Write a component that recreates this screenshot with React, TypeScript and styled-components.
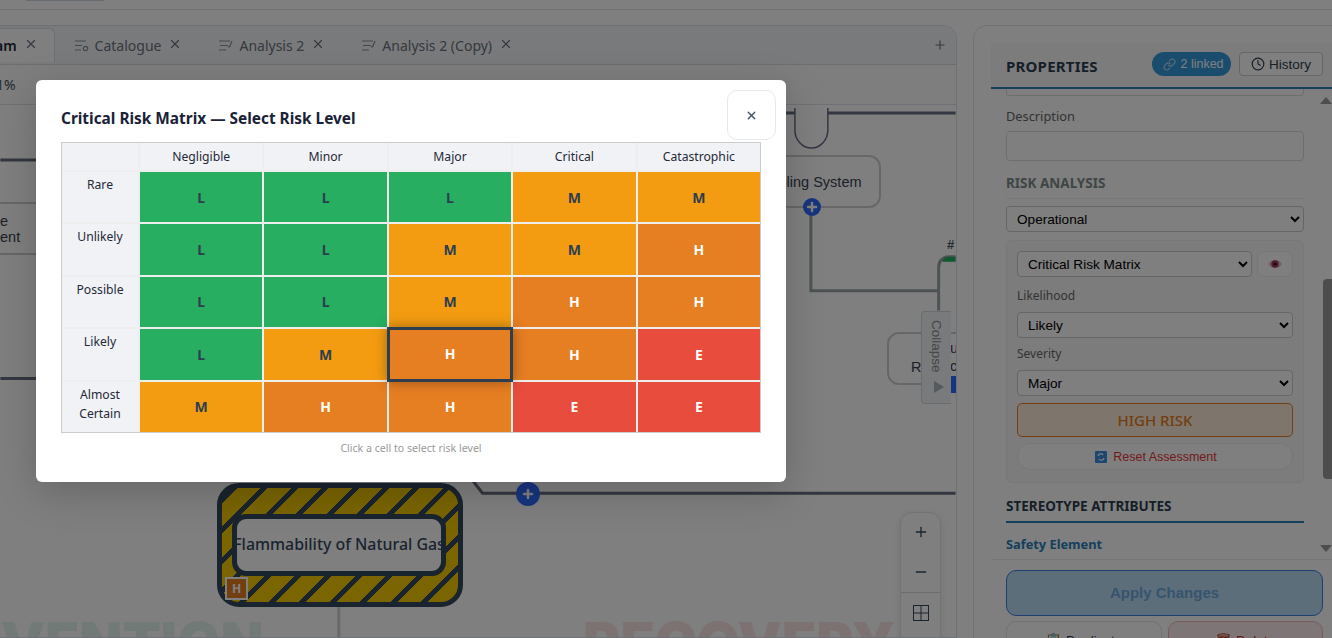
import React from 'react'
import styled, { createGlobalStyle } from 'styled-components'
import { Clock, Link, Plus, Minus, X } from 'lucide-react'

type Level = 'L' | 'M' | 'H' | 'E'

const severities = ['Negligible', 'Minor', 'Major', 'Critical', 'Catastrophic']

const matrix: { label: string; cells: Level[] }[] = [
  { label: 'Rare', cells: ['L', 'L', 'L', 'M', 'M'] },
  { label: 'Unlikely', cells: ['L', 'L', 'M', 'M', 'H'] },
  { label: 'Possible', cells: ['L', 'L', 'M', 'H', 'H'] },
  { label: 'Likely', cells: ['L', 'M', 'H', 'H', 'E'] },
  { label: 'Almost Certain', cells: ['M', 'H', 'H', 'E', 'E'] },
]

const levelColors: Record<Level, string> = {
  L: '#27ae60',
  M: '#f39c12',
  H: '#e67e22',
  E: '#e74c3c',
}

const GlobalStyle = createGlobalStyle`
  html, body {
    margin: 0;
    padding: 0;
    overflow: hidden;
  }

  body {
    background: #ffffff;
    font-family: 'Noto Sans', 'Open Sans', sans-serif;
  }

  * {
    box-sizing: border-box;
  }
`

const Page = styled.div`
  display: flex;
  flex-direction: column;
  height: 638px;
  overflow: hidden;
  position: relative;
  width: 1332px;
`

const TopBar = styled.header`
  background: #fff;
  border-bottom: 1px solid #dfe3e8;
  flex: 0 0 10px;
  padding-left: 26px;
`

const TopBarNub = styled.div`
  background: #cfd8e6;
  height: 1px;
  width: 78px;
`

const Workspace = styled.div`
  display: flex;
  flex: 1;
  gap: 16px;
  min-height: 0;
  padding-top: 15px;
`

const Editor = styled.section`
  background: #fff;
  border: 1px solid #dfe4ea;
  border-left: 0;
  border-radius: 0 14px 0 0;
  display: flex;
  flex: 0 0 957px;
  flex-direction: column;
  overflow: hidden;
`

const TabBar = styled.div`
  align-items: flex-start;
  background: #f3f5f7;
  border-bottom: 1px solid #d9dde2;
  display: flex;
  flex: 0 0 39px;
  padding: 2px 9px 0 0;
`

const Tab = styled.div<{ $active?: boolean }>`
  align-items: center;
  background: ${(p) => (p.$active ? '#fff' : 'transparent')};
  border: 1px solid ${(p) => (p.$active ? '#dde1e6' : 'transparent')};
  border-bottom: 0;
  border-radius: 0 6px 0 0;
  color: ${(p) => (p.$active ? '#1f2937' : '#6b7280')};
  display: flex;
  font-size: 14px;
  font-weight: ${(p) => (p.$active ? 600 : 400)};
  gap: 6px;
  height: 34px;
  margin-left: ${(p) => (p.$active ? '-43px' : '0')};
  padding: ${(p) => (p.$active ? '0 16px 0 0' : '0 16px 0 18px')};
  white-space: nowrap;
`

const TabClose = styled.span`
  color: #6b7280;
  display: inline-flex;
  margin-left: 1px;
  margin-top: -3px;
`

const AddTab = styled.span`
  align-items: center;
  color: #6b7280;
  display: flex;
  height: 34px;
  margin-left: auto;
`

const Toolbar = styled.div`
  align-items: center;
  background: #fdfdfd;
  border-bottom: 1px solid #dde1e6;
  color: #4b5563;
  display: flex;
  flex: 0 0 40px;
  font-size: 14px;
  margin-left: -12px;
`

const Canvas = styled.div`
  background: #ffffff;
  flex: 1;
  overflow: hidden;
  position: relative;
`

const Wires = styled.svg`
  height: 100%;
  left: 0;
  position: absolute;
  top: 0;
  width: 100%;
`

const FlowNode = styled.div<{ $x: number; $y: number; $w: number; $h: number }>`
  align-items: center;
  background: #fff;
  border: 2px solid #cfcfcf;
  border-radius: 12px;
  color: #374151;
  display: flex;
  font-family: 'Liberation Sans', Arial, sans-serif;
  font-size: 14.5px;
  height: ${(p) => p.$h}px;
  left: ${(p) => p.$x}px;
  line-height: 16px;
  position: absolute;
  top: ${(p) => p.$y}px;
  width: ${(p) => p.$w}px;
`

const NodeText = styled.span<{ $indent: number; $drop?: number }>`
  margin-left: ${(p) => p.$indent}px;
  margin-top: ${(p) => p.$drop ?? 0}px;
`

const NodeTail = styled.div`
  color: #374151;
  font-family: 'Liberation Sans', Arial, sans-serif;
  font-size: 14.5px;
  left: 950px;
  line-height: 18px;
  position: absolute;
  top: 234px;
`

const WireTag = styled.div`
  color: #4b5563;
  font-family: 'Liberation Sans', Arial, sans-serif;
  font-size: 13px;
  font-weight: 700;
  left: 947px;
  position: absolute;
  top: 132px;
`

const PortMark = styled.div`
  background: #2f6bff;
  height: 17px;
  left: 951px;
  position: absolute;
  top: 271px;
  width: 8px;
`

const AddBubble = styled.div<{ $x: number; $y: number; $size: number }>`
  align-items: center;
  background: #2f6bff;
  border-radius: 50%;
  color: #fff;
  display: flex;
  height: ${(p) => p.$size}px;
  justify-content: center;
  left: ${(p) => p.$x}px;
  position: absolute;
  top: ${(p) => p.$y}px;
  width: ${(p) => p.$size}px;
`

const HazardNode = styled.div`
  align-items: center;
  background: repeating-linear-gradient(
    -45deg,
    #34495e 0,
    #34495e 5px,
    #f5cb00 5px,
    #f5cb00 21.5px
  );
  border: 5px solid #34495e;
  border-radius: 22px;
  display: flex;
  height: 124px;
  justify-content: center;
  left: 217px;
  padding-right: 2px;
  position: absolute;
  top: 378px;
  width: 246px;
`

const HazardLabel = styled.div`
  align-items: center;
  background: #fff;
  border: 5px solid #34495e;
  border-radius: 14px;
  color: #34495e;
  display: flex;
  font-size: 15.9px;
  font-weight: 500;
  height: 62px;
  justify-content: center;
  overflow: hidden;
  padding-bottom: 2px;
  white-space: nowrap;
  width: 214px;
`

const RiskBadge = styled.div`
  align-items: center;
  background: #e67e22;
  border: 2px solid #fff;
  bottom: 2px;
  color: #fff;
  display: flex;
  font-size: 12px;
  font-weight: 700;
  height: 23px;
  justify-content: center;
  left: 3px;
  position: absolute;
  width: 23px;
`

const Watermark = styled.div<{ $x: number; $color: string }>`
  color: ${(p) => p.$color};
  font-family: Inter, 'Liberation Sans', Arial, sans-serif;
  font-size: 56px;
  font-weight: 900;
  left: ${(p) => p.$x}px;
  position: absolute;
  top: 504px;
  white-space: nowrap;
`

const CollapseTab = styled.div`
  align-items: center;
  background: #f3f5f7;
  border: 1px solid #d5d9de;
  border-right: 0;
  border-radius: 4px 0 0 4px;
  color: #868c93;
  display: flex;
  flex-direction: column;
  font-family: 'Liberation Sans', Arial, sans-serif;
  font-size: 13.5px;
  gap: 8px;
  height: 93px;
  left: 921px;
  padding-top: 8px;
  position: absolute;
  top: 206px;
  width: 30px;
`

const CollapseLabel = styled.span`
  writing-mode: vertical-rl;
`

const CollapseArrow = styled.span`
  border-bottom: 6px solid transparent;
  border-left: 10px solid #a9b4ba;
  border-top: 6px solid transparent;
  height: 0;
  margin-left: 4px;
  width: 0;
`

const ZoomControls = styled.div`
  background: #fff;
  border: 1px solid #e5e7eb;
  border-radius: 12px 12px 0 0;
  box-shadow: 0 2px 8px rgba(0, 0, 0, 0.1);
  color: #34495e;
  height: 140px;
  left: 900px;
  position: absolute;
  top: 407px;
  width: 41px;
`

const ZoomButton = styled.div<{ $divided?: boolean }>`
  align-items: center;
  border-top: ${(p) => (p.$divided ? '1px solid #d8dbe0' : '0')};
  display: flex;
  height: 40px;
  justify-content: center;

  &:first-child {
    margin-top: -1px;
  }
`

const Sidebar = styled.aside`
  background: #fff;
  border: 1px solid #dfe7ef;
  border-bottom: 0;
  border-right: 0;
  border-radius: 14px 0 0 0;
  display: flex;
  flex: 1;
  flex-direction: column;
  min-width: 0;
  padding: 17px 0 0 17px;
`

const SidebarHeader = styled.div`
  align-items: center;
  background: #f8f9fa;
  border-bottom: 2px solid #2980b9;
  display: flex;
  flex: 0 0 46px;
  gap: 8px;
  padding: 0 9px 2px 15px;
`

const SidebarTitle = styled.h2`
  color: #2c3e50;
  font-size: 15px;
  font-weight: 700;
  letter-spacing: 0.2px;
  margin: 3px auto 0 0;
`

const LinkedPill = styled.span`
  align-items: center;
  background: #3498db;
  border-radius: 12px;
  color: #fff;
  display: flex;
  font-family: 'Liberation Sans', Arial, sans-serif;
  font-size: 12.5px;
  gap: 4px;
  height: 24px;
  justify-content: center;
  padding-left: 4px;
  width: 79px;
`

const HistoryButton = styled.span`
  align-items: center;
  background: #fff;
  border: 1px solid #ccc;
  border-radius: 4px;
  color: #2c3e50;
  display: flex;
  font-family: 'Liberation Sans', Arial, sans-serif;
  font-size: 13.5px;
  gap: 4px;
  height: 24px;
  justify-content: center;
  width: 84px;
`

const ScrollArea = styled.div`
  flex: 0 0 470px;
  overflow: hidden;
  padding: 0 28px 0 15px;
  position: relative;
`

const ScrollArrow = styled.div<{ $down?: boolean }>`
  border-left: 6px solid transparent;
  border-right: 6px solid transparent;
  ${(p) =>
    p.$down
      ? 'border-top: 7px solid #9a9a9a; bottom: 7px;'
      : 'border-bottom: 7px solid #9a9a9a; top: 8px;'}
  height: 0;
  position: absolute;
  right: 0;
  width: 0;
`

const ScrollThumb = styled.div`
  background: #9a9a9a;
  border-radius: 4px 0 0 4px;
  height: 200px;
  position: absolute;
  right: 0;
  top: 190px;
  width: 9px;
`

const Input = styled.div<{ $clipped?: boolean }>`
  background: #fff;
  border: 1px solid #ddd;
  border-radius: 4px;
  height: ${(p) => (p.$clipped ? '7px' : '30px')};
  ${(p) => p.$clipped && 'border-top: 0; border-radius: 0 0 4px 4px;'}
`

const FieldLabel = styled.label<{ $small?: boolean }>`
  color: #666;
  display: block;
  font-size: ${(p) => (p.$small ? '12px' : '12.8px')};
  line-height: 18px;
  margin: ${(p) => (p.$small ? '7px 0 7px' : '11px 0 6px')};
`

const SectionTitle = styled.h3`
  border-bottom: 1px solid #eee;
  color: #7f8c8d;
  font-size: 13.5px;
  font-weight: 700;
  line-height: 18px;
  margin: 13px 0 7px;
  padding-bottom: 6px;
`

const NativeSelect = styled.select<{ $grow?: boolean }>`
  background: #fff;
  border: 1px solid #ccc;
  border-radius: 4px;
  color: #000;
  display: block;
  flex: ${(p) => (p.$grow ? 1 : 'none')};
  font-family: 'Liberation Sans', Arial, sans-serif;
  font-size: 13.6px;
  height: 26px;
  min-width: 0;
  padding: 0 6px;
  width: ${(p) => (p.$grow ? 'auto' : '100%')};
`

const RiskBox = styled.div`
  background: #f8f9fa;
  border: 1px solid #eee;
  border-radius: 6px;
  margin-top: 8px;
  padding: 10px 10px 12px;
`

const MatrixRow = styled.div`
  align-items: center;
  display: flex;
  gap: 5px;
  margin-bottom: 10px;
`

const EyeButton = styled.div`
  align-items: center;
  background: #fff;
  border: 1px solid #eee;
  border-radius: 8px;
  display: flex;
  flex: 0 0 36px;
  height: 26px;
  justify-content: center;
`

const RiskResult = styled.div`
  align-items: center;
  background: #fdebd9;
  border: 1px solid #e67e22;
  border-radius: 5px;
  color: #e67e22;
  display: flex;
  font-size: 15px;
  font-weight: 500;
  height: 34px;
  justify-content: center;
  margin-top: 7px;
`

const ResetButton = styled.div`
  align-items: center;
  background: #fff;
  border: 1px solid #eee;
  border-radius: 13px;
  color: #e53935;
  display: flex;
  font-family: 'Liberation Sans', Arial, sans-serif;
  font-size: 12.5px;
  gap: 6px;
  height: 27px;
  justify-content: center;
  margin-top: 6px;
  padding-left: 2px;
`

const AttributesTitle = styled.h3`
  border-bottom: 2px solid #2980b9;
  color: #2c3e50;
  font-size: 13.5px;
  font-weight: 700;
  line-height: 18px;
  margin: 14px 0 0;
  padding-bottom: 6px;
`

const GroupTitle = styled.div`
  color: #2980b9;
  font-size: 12.8px;
  font-weight: 700;
  line-height: 18px;
  margin-top: 12px;
`

const SidebarFooter = styled.div`
  border-top: 1px solid #eee;
  display: flex;
  flex-direction: column;
  gap: 5px;
  padding: 10px 9px 0 15px;
`

const ApplyButton = styled.div`
  align-items: center;
  background: #b8dcf4;
  border: 1px solid #3b7ddd;
  border-radius: 10px;
  color: #6fa8dc;
  display: flex;
  flex: 0 0 46px;
  font-family: 'Liberation Sans', Arial, sans-serif;
  font-size: 15px;
  font-weight: 700;
  justify-content: center;
  padding-bottom: 2px;
`

const FooterActions = styled.div`
  display: flex;
  gap: 6px;
`

const FooterButton = styled.div<{ $danger?: boolean }>`
  align-items: flex-start;
  background: ${(p) => (p.$danger ? '#fdecec' : '#fff')};
  border: 1px solid ${(p) => (p.$danger ? '#f3b4b4' : '#e1e4e8')};
  border-radius: 10px;
  color: ${(p) => (p.$danger ? '#c0392b' : '#2c3e50')};
  display: flex;
  flex: 1;
  font-family: 'Liberation Sans', Arial, sans-serif;
  font-size: 13.5px;
  gap: 6px;
  height: 40px;
  justify-content: center;
  padding-top: 10px;
`

const Overlay = styled.div`
  background: rgba(0, 0, 0, 0.5);
  inset: 0;
  padding: 80px 0 0 36px;
  position: absolute;
`

const Modal = styled.div`
  background: #fff;
  border-radius: 6px;
  box-shadow: 0 10px 40px rgba(0, 0, 0, 0.2);
  height: 402px;
  padding: 29px 25px 0;
  position: relative;
  width: 750px;
`

const ModalTitle = styled.h2`
  color: #1a2238;
  font-size: 15.4px;
  font-weight: 700;
  line-height: 20px;
  margin: 0 0 13px;
`

const CloseButton = styled.div`
  align-items: center;
  background: #fff;
  border: 1px solid #e4e8f1;
  border-radius: 10px;
  color: #475569;
  display: flex;
  height: 50px;
  justify-content: center;
  position: absolute;
  right: 10px;
  top: 10px;
  width: 49px;
`

const Matrix = styled.div`
  background: #eeeeee;
  border: 1px solid #cccccc;
  display: grid;
  gap: 2px;
  grid-template-columns: 76px repeat(5, 1fr);
  grid-template-rows: 27px repeat(5, 1fr);
  height: 291px;
  width: 700px;
`

const HeaderCell = styled.div`
  align-items: center;
  background: #f1f2f6;
  color: #1f2937;
  display: flex;
  font-size: 12.2px;
  justify-content: center;
`

const RowLabel = styled.div`
  background: #f1f2f6;
  color: #1f2937;
  font-size: 12.2px;
  line-height: 19px;
  padding: 3px 8px 0;
  text-align: center;
`

const RiskCell = styled.div<{ $level: Level; $selected?: boolean }>`
  align-items: center;
  background: ${(p) => levelColors[p.$level]};
  box-shadow: ${(p) => (p.$selected ? '0 0 12px 2px rgba(0, 0, 0, 0.35)' : 'none')};
  color: ${(p) => (p.$level === 'H' || p.$level === 'E' ? '#fff' : '#2c3e50')};
  display: flex;
  font-size: 14px;
  font-weight: 700;
  justify-content: center;
  outline: ${(p) => (p.$selected ? '3px solid #2c3e50' : '0')};
  outline-offset: -1px;
  padding-bottom: ${(p) => (p.$selected ? '2px' : '0')};
  position: relative;
  z-index: ${(p) => (p.$selected ? 1 : 0)};
`

const MatrixHint = styled.p`
  color: #999;
  font-size: 10.6px;
  line-height: 14px;
  margin: 8px 0 0;
  text-align: center;
`

function TabIcon({ analysis }: { analysis?: boolean }) {
  return (
    <svg width="15" height="13" viewBox="0 0 15 13" fill="none" stroke="#8a8f96" strokeWidth="1.2">
      {analysis ? (
        <>
          <path d="M1 2h11M2 6.5h8M1 11h7" />
          <path d="M10 8a2.5 2.5 0 0 0 2.5-2.5L14 2" />
        </>
      ) : (
        <>
          <path d="M1 2h11M1 6.5h7M1 11h6" />
          <circle cx="11.5" cy="9.5" r="2.2" />
        </>
      )}
    </svg>
  )
}

function BubblePlus() {
  return (
    <svg width="14" height="14" viewBox="0 0 14 14" fill="none" stroke="currentColor" strokeWidth="2.5" strokeLinecap="round">
      <path d="M7 3v8M3 7h8" />
    </svg>
  )
}

function ResetIcon() {
  return (
    <svg width="12" height="12" viewBox="0 0 12 12">
      <rect width="12" height="12" rx="1" fill="#3d8fe0" />
      <path d="M3 5a3 3 0 0 1 5.3-1M9 7a3 3 0 0 1-5.3 1" fill="none" stroke="#fff" strokeWidth="1.2" />
    </svg>
  )
}

function EyeIcon() {
  return (
    <svg width="14" height="12" viewBox="0 0 14 12">
      <ellipse cx="7" cy="6" rx="6.5" ry="4" fill="#d9c9cc" />
      <circle cx="7" cy="6" r="3.8" fill="#a83a58" />
      <circle cx="7" cy="6" r="1.6" fill="#2a1018" />
    </svg>
  )
}

function DiagramWires() {
  return (
    <Wires viewBox="0 0 957 533">
      <g fill="none" stroke="#666e82" strokeWidth="3">
        <path d="M0 55h40" />
        <path d="M0 274h40" />
        <path d="M770 8h26M829 8h128" />
        <path d="M470 372l13 17h474" />
      </g>
      <path d="M796 3v22a16.5 18 0 0 0 33 0V3" fill="#fff" stroke="#666e82" strokeWidth="1.5" />
      <g fill="none" stroke="#9aa6aa" strokeWidth="3">
        <path d="M812 110v76h128" />
        <path d="M940 206v-44a10 10 0 0 1 10-10h7" />
      </g>
      <path d="M944 155a8 8 0 0 1 6-3h7v5h-13z" fill="#27ae60" />
      <path d="M339 503v30" stroke="#cfd2d6" strokeWidth="3" />
    </Wires>
  )
}

export default function App() {
  return (
    <Page>
      <GlobalStyle />
      <TopBar>
        <TopBarNub />
      </TopBar>

      <Workspace>
        <Editor>
          <TabBar>
            <Tab $active>
              Diagram
              <TabClose>
                <X size={14} />
              </TabClose>
            </Tab>
            <Tab>
              <TabIcon />
              Catalogue
              <TabClose>
                <X size={14} />
              </TabClose>
            </Tab>
            <Tab>
              <TabIcon analysis />
              Analysis 2
              <TabClose>
                <X size={14} />
              </TabClose>
            </Tab>
            <Tab>
              <TabIcon analysis />
              Analysis 2 (Copy)
              <TabClose>
                <X size={14} />
              </TabClose>
            </Tab>
            <AddTab>
              <Plus size={14} />
            </AddTab>
          </TabBar>
          <Toolbar>91%</Toolbar>
          <Canvas>
            <Watermark $x={-108} $color="#e4f4f0">
              PREVENTION
            </Watermark>
            <Watermark $x={583} $color="#f8e4e2">
              RECOVERY
            </Watermark>
            <DiagramWires />
            <FlowNode $x={-60} $y={97} $w={120} $h={53}>
              <NodeText $indent={58}>
                e
                <br />
                ent
              </NodeText>
            </FlowNode>
            <FlowNode $x={720} $y={50} $w={161} $h={53}>
              <NodeText $indent={38}>Cooling System</NodeText>
            </FlowNode>
            <AddBubble $x={803} $y={93} $size={18}>
              <BubblePlus />
            </AddBubble>
            <WireTag>#</WireTag>
            <FlowNode $x={887} $y={227} $w={100} $h={53}>
              <NodeText $indent={22} $drop={16}>
                Re
              </NodeText>
            </FlowNode>
            <NodeTail>
              u
              <br />
              c
            </NodeTail>
            <PortMark />
            <HazardNode>
              <HazardLabel>Flammability of Natural Gas</HazardLabel>
              <RiskBadge>H</RiskBadge>
            </HazardNode>
            <AddBubble $x={516} $y={377} $size={24}>
              <BubblePlus />
            </AddBubble>
            <CollapseTab>
              <CollapseLabel>Collapse</CollapseLabel>
              <CollapseArrow />
            </CollapseTab>
            <ZoomControls>
              <ZoomButton>
                <Plus size={16} />
              </ZoomButton>
              <ZoomButton>
                <Minus size={16} />
              </ZoomButton>
              <ZoomButton $divided>
                <svg width="16" height="16" viewBox="0 0 16 16" fill="none" stroke="currentColor">
                  <rect x="0.5" y="0.5" width="15" height="15" />
                  <path d="M8 0v16M0 8h16" />
                </svg>
              </ZoomButton>
            </ZoomControls>
          </Canvas>
        </Editor>

        <Sidebar>
          <SidebarHeader>
            <SidebarTitle>PROPERTIES</SidebarTitle>
            <LinkedPill>
              <Link size={13} color="#ffffffaa" />2 linked
            </LinkedPill>
            <HistoryButton>
              <Clock size={14} />
              History
            </HistoryButton>
          </SidebarHeader>

          <ScrollArea>
            <Input $clipped />
            <FieldLabel>Description</FieldLabel>
            <Input />
            <SectionTitle>RISK ANALYSIS</SectionTitle>
            <NativeSelect defaultValue="Operational">
              <option>Operational</option>
            </NativeSelect>
            <RiskBox>
              <MatrixRow>
                <NativeSelect $grow defaultValue="Critical Risk Matrix">
                  <option>Critical Risk Matrix</option>
                </NativeSelect>
                <EyeButton>
                  <EyeIcon />
                </EyeButton>
              </MatrixRow>
              <FieldLabel $small>Likelihood</FieldLabel>
              <NativeSelect defaultValue="Likely">
                <option>Likely</option>
              </NativeSelect>
              <FieldLabel $small>Severity</FieldLabel>
              <NativeSelect defaultValue="Major">
                <option>Major</option>
              </NativeSelect>
              <RiskResult>HIGH RISK</RiskResult>
              <ResetButton>
                <ResetIcon />
                Reset Assessment
              </ResetButton>
            </RiskBox>
            <AttributesTitle>STEREOTYPE ATTRIBUTES</AttributesTitle>
            <GroupTitle>Safety Element</GroupTitle>
            <ScrollArrow />
            <ScrollThumb />
            <ScrollArrow $down />
          </ScrollArea>

          <SidebarFooter>
            <ApplyButton>Apply Changes</ApplyButton>
            <FooterActions>
              <FooterButton>📋 Duplicate</FooterButton>
              <FooterButton $danger>🗑 Delete</FooterButton>
            </FooterActions>
          </SidebarFooter>
        </Sidebar>
      </Workspace>

      <Overlay>
        <Modal>
          <ModalTitle>Critical Risk Matrix — Select Risk Level</ModalTitle>
          <CloseButton>
            <X size={13} strokeWidth={2.5} />
          </CloseButton>
          <Matrix>
            <HeaderCell />
            {severities.map((s) => (
              <HeaderCell key={s}>{s}</HeaderCell>
            ))}
            {matrix.map((row) => (
              <React.Fragment key={row.label}>
                <RowLabel>{row.label}</RowLabel>
                {row.cells.map((level, i) => (
                  <RiskCell
                    key={severities[i]}
                    $level={level}
                    $selected={row.label === 'Likely' && severities[i] === 'Major'}
                  >
                    {level}
                  </RiskCell>
                ))}
              </React.Fragment>
            ))}
          </Matrix>
          <MatrixHint>Click a cell to select risk level</MatrixHint>
        </Modal>
      </Overlay>
    </Page>
  )
}
